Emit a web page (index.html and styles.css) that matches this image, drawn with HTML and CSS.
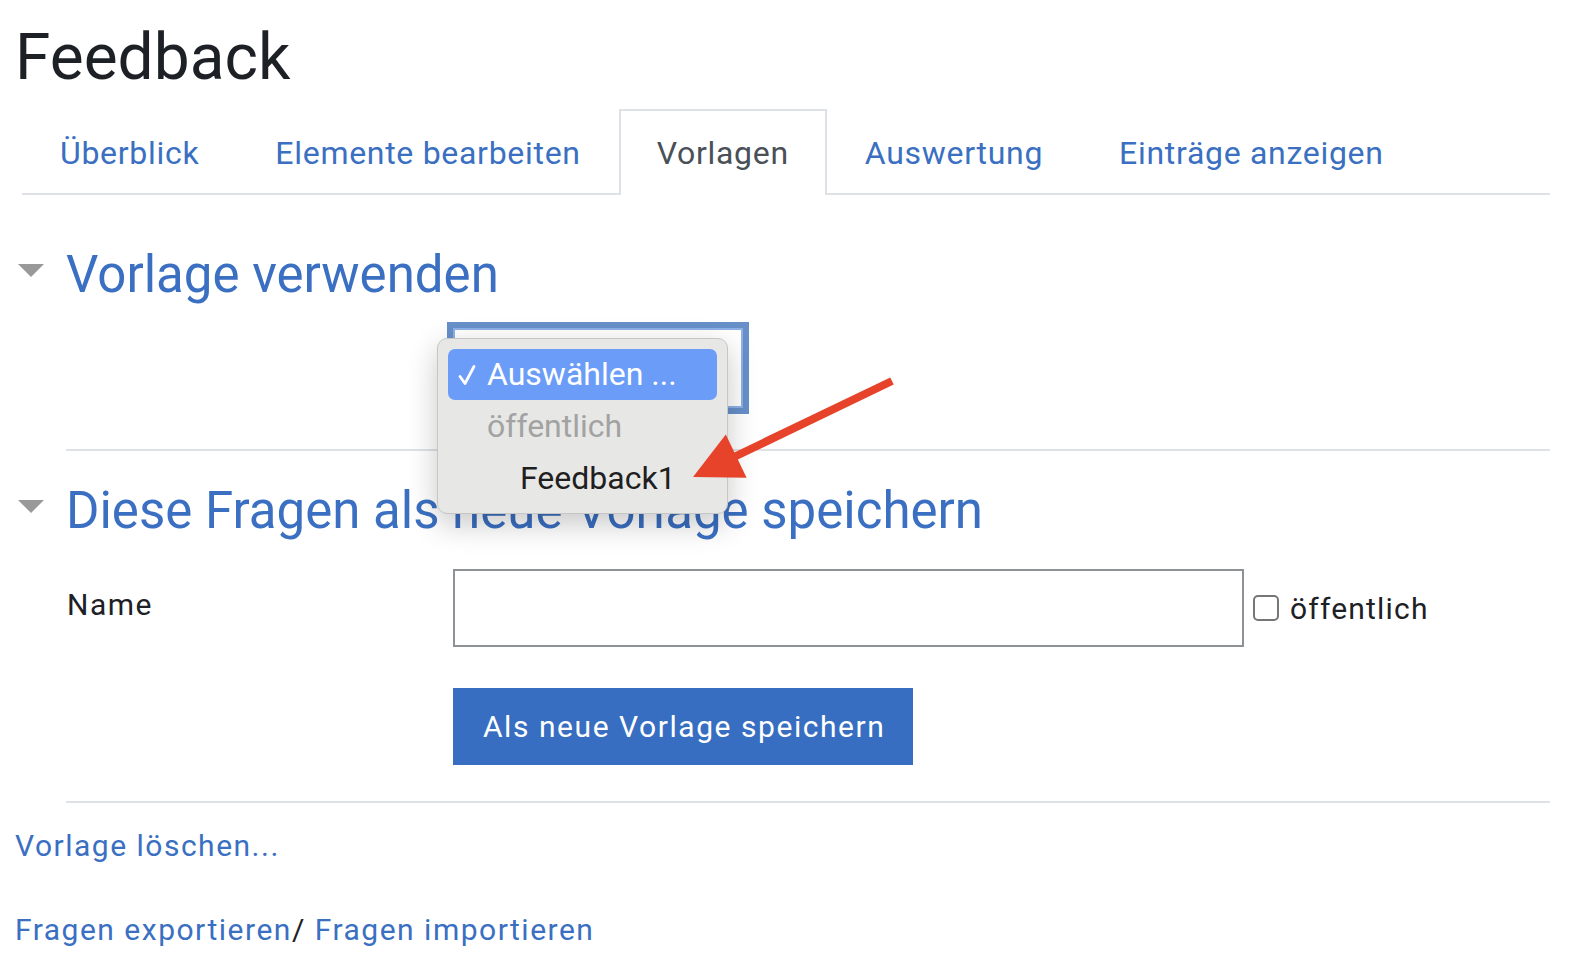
FILE: index.html
```html
<!DOCTYPE html>
<html lang="de">
<head>
<meta charset="utf-8">
<title>Feedback</title>
<link rel="stylesheet" href="styles.css">
</head>
<body>
<div class="page">
  <h1 class="title">Feedback</h1>
  <ul class="tabs">
    <li class="tab"><a href="#">Überblick</a></li>
    <li class="tab"><a href="#">Elemente bearbeiten</a></li>
    <li class="tab active"><span>Vorlagen</span></li>
    <li class="tab"><a href="#">Auswertung</a></li>
    <li class="tab"><a href="#">Einträge anzeigen</a></li>
  </ul>

  <section class="fs fs-first">
    <h3 class="legend"><span class="caret"></span><span>Vorlage verwenden</span></h3>
    <div class="fs-body fs-body-first">
      <div class="row">
        <div class="label"></div>
        <div class="control"><div class="select"></div></div>
      </div>
    </div>
  </section>

  <section class="fs fs-second">
    <h3 class="legend"><span class="caret"></span><span>Diese Fragen als neue Vorlage speichern</span></h3>
    <div class="fs-body fs-body-second">
      <div class="row">
        <div class="label">Name</div>
        <div class="control control-inline">
          <div class="input"></div>
          <span class="checkbox"></span>
          <span class="check-label">öffentlich</span>
        </div>
      </div>
      <div class="row row-button">
        <div class="label"></div>
        <div class="control"><button class="btn" type="button">Als neue Vorlage speichern</button></div>
      </div>
    </div>
  </section>

  <p class="link-line link-first"><a href="#">Vorlage löschen...</a></p>
  <p class="link-line link-second"><a href="#">Fragen exportieren</a>/ <a href="#">Fragen importieren</a></p>

  <div class="popup">
    <div class="opt opt-selected">
      <svg class="tick" width="18" height="22" viewBox="0 0 18 22"><polyline points="2,12.5 7,19.5 16,2.5" fill="none" stroke="#ffffff" stroke-width="2.8" stroke-linecap="round" stroke-linejoin="round"/></svg>
      <span>Auswählen ...</span>
    </div>
    <div class="opt opt-group">öffentlich</div>
    <div class="opt opt-child">Feedback1</div>
  </div>

  <svg class="arrow" width="1578" height="980" viewBox="0 0 1578 980">
    <line x1="892" y1="381" x2="734" y2="457" stroke="#e6432a" stroke-width="8"/>
    <polygon points="693,477 725.8,434.6 746.6,477.8" fill="#e6432a"/>
  </svg>
</div>
</body>
</html>
```

FILE: styles.css
```css
* { box-sizing: border-box; }

body {
  margin: 0;
  background: #ffffff;
  color: #1d2125;
  font-family: Roboto, "Liberation Sans", Arial, sans-serif;
}

a { color: #3a6fc2; text-decoration: none; }

.page {
  position: relative;
  width: 1578px;
  height: 980px;
  overflow: hidden;
  padding: 19px 28px 0 15px;
}

.title {
  margin: 0;
  font-size: 64px;
  font-weight: 400;
  line-height: 77px;
  color: #1d2125;
}

.tabs {
  list-style: none;
  display: flex;
  margin: 13px 0 0 7px;
  padding: 0;
  border-bottom: 2px solid #dee2e6;
}

.tab {
  border: 2px solid transparent;
  border-bottom: 0;
  margin-bottom: -2px;
  padding: 18px 36px;
  font-size: 32px;
  line-height: 48px;
  letter-spacing: 0.7px;
}

.tab.active {
  border-color: #dee2e6;
  background: #ffffff;
  color: #495057;
}

.legend {
  display: flex;
  align-items: center;
  margin: 0;
  font-size: 51px;
  font-weight: 400;
  line-height: 61px;
  color: #3a6fc2;
}

.fs-first .legend { margin-top: 49px; }
.fs-second .legend { margin-top: 29px; }

.caret {
  width: 0;
  height: 0;
  border-left: 13px solid transparent;
  border-right: 13px solid transparent;
  border-top: 13px solid #999999;
  margin: 0 22px 8px 3px;
}

.fs-body {
  margin-left: 51px;
  border-bottom: 2px solid #dee2e6;
}

.fs-body-first { padding: 23px 0 41px; }
.fs-body-second { padding: 28px 0 36px; }

.row { display: flex; align-items: flex-start; }
.row-button { margin-top: 41px; }

.label {
  width: 387px;
  flex: none;
  font-size: 30px;
  line-height: 45px;
  letter-spacing: 1.5px;
  padding-top: 13px;
  padding-left: 1px;
}

.control { flex: none; }
.control-inline { display: flex; align-items: center; }

.select {
  width: 290px;
  height: 80px;
  background: #ffffff;
  border: 2px solid #8db1e6;
  box-shadow: 0 0 0 6px #6790c9;
}

.input {
  width: 791px;
  height: 78px;
  border: 2px solid #8e9297;
  background: #ffffff;
}

.checkbox {
  width: 26px;
  height: 26px;
  margin-left: 9px;
  border: 2px solid #767676;
  border-radius: 5px;
  background: #ffffff;
}

.check-label {
  margin-left: 11px;
  font-size: 30px;
  line-height: 45px;
  letter-spacing: 1.2px;
  color: #1d2125;
}

.btn {
  height: 77px;
  padding: 0 28px 0 30px;
  border: 0;
  border-radius: 0;
  background: #376ec1;
  color: #ffffff;
  font-family: Roboto, "Liberation Sans", Arial, sans-serif;
  font-size: 30px;
  line-height: 45px;
  letter-spacing: 1.55px;
}

.link-line {
  margin: 0;
  font-size: 30px;
  line-height: 45px;
  letter-spacing: 1.5px;
}

.link-first { margin-top: 20px; }
.link-second { margin-top: 39px; }

.popup {
  position: absolute;
  left: 437px;
  top: 338px;
  width: 291px;
  height: 176px;
  padding: 10px 10px 0 10px;
  background: #e7e7e6;
  border: 1px solid #c6c6c6;
  border-radius: 10px;
  box-shadow: 0 10px 30px rgba(0, 0, 0, 0.22);
  font-size: 32px;
}

.opt {
  height: 52px;
  line-height: 52px;
  padding-left: 39px;
  color: #1f1f1f;
  white-space: nowrap;
}

.opt-selected {
  display: flex;
  align-items: center;
  padding-left: 10px;
  height: 51px;
  line-height: 51px;
  background: #6a9cf8;
  border-radius: 7px;
  color: #ffffff;
}

.tick { margin-right: 11px; flex: none; }

.opt-group { color: #a2a2a2; }
.opt-child { padding-left: 72px; }

.arrow {
  position: absolute;
  left: 0;
  top: 0;
  pointer-events: none;
}
```
